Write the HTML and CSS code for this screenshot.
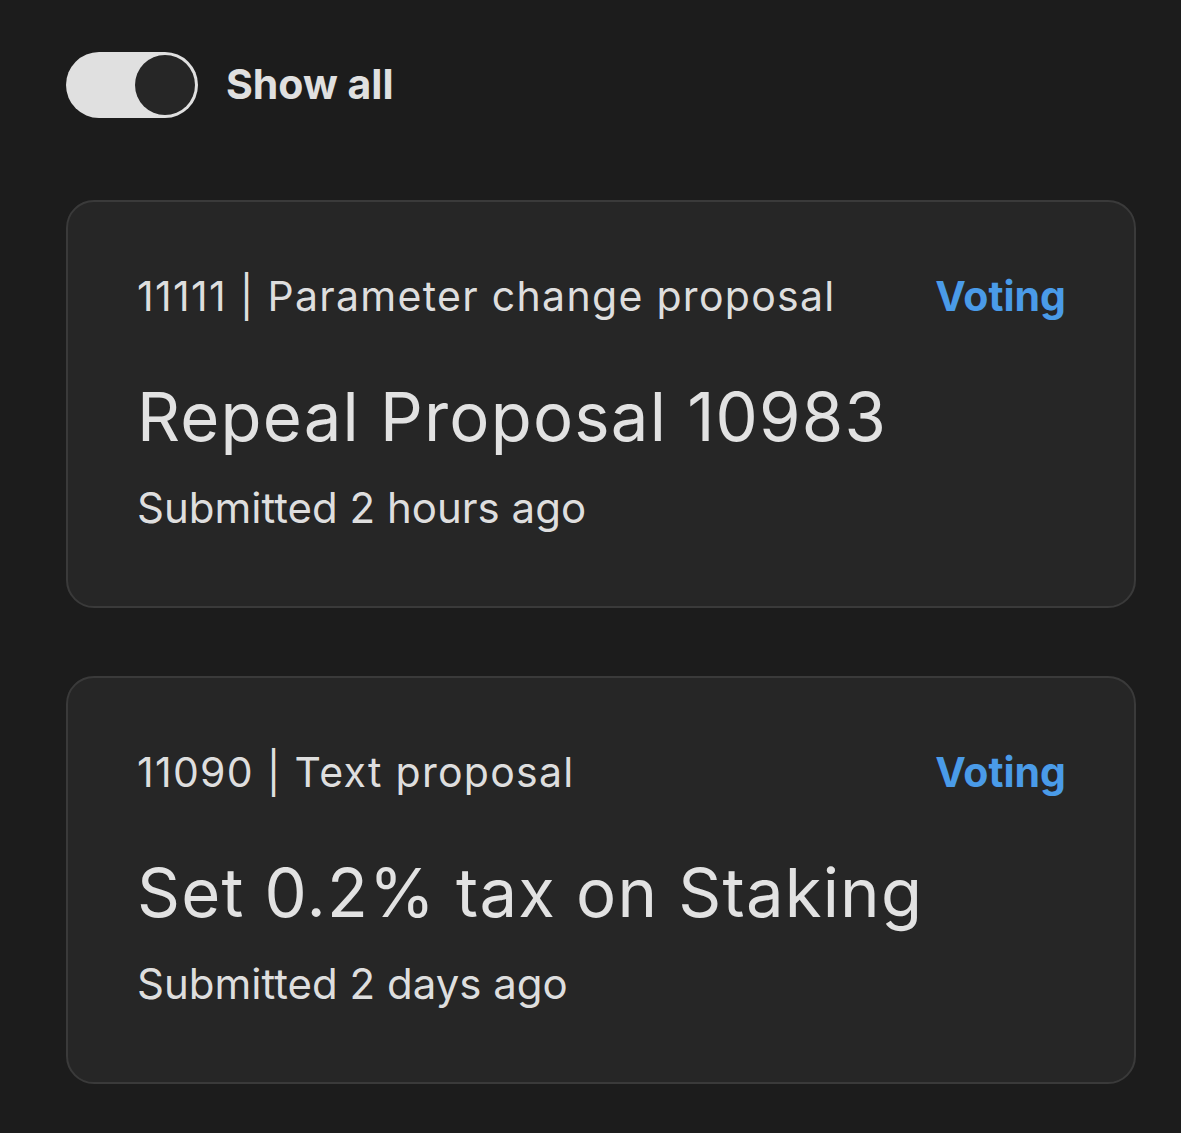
FILE: index.html
```html
<!DOCTYPE html>
<html lang="en">
<head>
<meta charset="utf-8">
<title>Proposals</title>
<link rel="stylesheet" href="styles.css">
</head>
<body>
<main class="page">
  <div class="filter">
    <span class="toggle" role="switch" aria-checked="true"><span class="knob"></span></span>
    <span class="filter-label">Show all</span>
  </div>
  <section class="list">
    <article class="card">
      <div class="meta-row">
        <span class="meta">11111 | Parameter change proposal</span>
        <span class="status">Voting</span>
      </div>
      <h2 class="title">Repeal Proposal 10983</h2>
      <p class="submitted">Submitted 2 hours ago</p>
    </article>
    <article class="card">
      <div class="meta-row">
        <span class="meta">11090 | Text proposal</span>
        <span class="status">Voting</span>
      </div>
      <h2 class="title">Set 0.2% tax on Staking</h2>
      <p class="submitted">Submitted 2 days ago</p>
    </article>
  </section>
</main>
</body>
</html>
```

FILE: styles.css
```css
html, body {
  margin: 0;
  padding: 0;
  background: #1c1c1c;
}

body {
  font-family: Inter, "Noto Sans", sans-serif;
  color: #e0e0e0;
}

.page {
  padding: 52px 45px 0 66px;
}

.filter {
  display: flex;
  align-items: center;
  gap: 28px;
}

.toggle {
  display: flex;
  justify-content: flex-end;
  align-items: center;
  box-sizing: border-box;
  width: 132px;
  height: 66px;
  padding: 3px;
  border-radius: 33px;
  background: #e0e0e0;
}

.knob {
  width: 60px;
  height: 60px;
  border-radius: 50%;
  background: #262626;
}

.filter-label {
  font-size: 41px;
  font-weight: 700;
  line-height: 1.2;
  color: #e0e0e0;
}

.list {
  margin-top: 82px;
  display: flex;
  flex-direction: column;
  gap: 68px;
}

.card {
  box-sizing: border-box;
  border: 2px solid #3a3a3a;
  border-radius: 28px;
  background: #262626;
  padding: 70px 68px 73px 69px;
}

.meta-row {
  display: flex;
  justify-content: space-between;
  align-items: baseline;
  line-height: 1.2;
}

.meta {
  font-size: 41px;
  font-weight: 400;
  letter-spacing: 1.3px;
  color: #dedede;
}

.status {
  font-size: 41px;
  font-weight: 700;
  color: #4a9be8;
}

.title {
  margin: 56px 0 0;
  font-size: 67px;
  font-weight: 400;
  letter-spacing: 1.2px;
  line-height: 1.2;
  color: #e2e2e2;
}

.submitted {
  margin: 25px 0 0;
  font-size: 42px;
  font-weight: 400;
  line-height: 1.2;
  color: #dedede;
}
```
